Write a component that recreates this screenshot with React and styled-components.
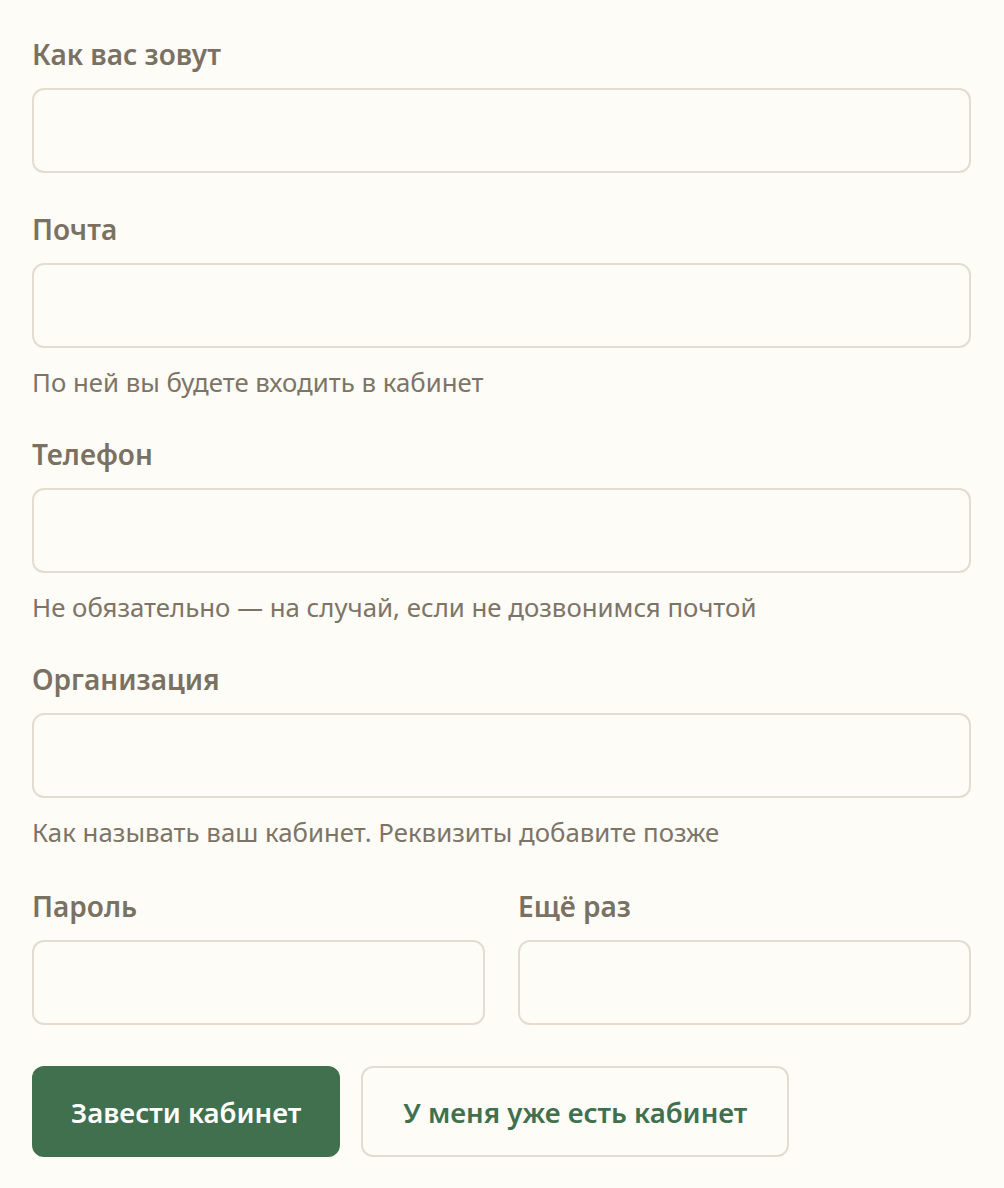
import styled, { createGlobalStyle } from "styled-components";

const GlobalStyle = createGlobalStyle`
  body {
    margin: 0;
    background: #fefcf7;
    font-family: "Noto Sans", "Open Sans", sans-serif;
  }
`;

const Page = styled.form`
  box-sizing: border-box;
  width: 1004px;
  padding: 36px 33px 30px 32px;
  display: flex;
  flex-direction: column;
`;

const Field = styled.div`
  display: flex;
  flex-direction: column;
  margin-bottom: ${(p) => (p.$last ? "0" : "38px")};
  min-width: 0;
`;

const Label = styled.label`
  font-size: 28px;
  font-weight: 600;
  line-height: 36px;
  color: #7a7163;
  margin-bottom: 16px;
`;

const Input = styled.input`
  box-sizing: border-box;
  width: 100%;
  height: 85px;
  border: 2px solid #e2ddd0;
  border-radius: 12px;
  background: #fefcf7;
  font-family: inherit;
  font-size: 24px;
  padding: 0 20px;
  outline: none;
`;

const Hint = styled.div`
  font-size: 25.8px;
  line-height: 32px;
  color: #7d7466;
  margin-top: 18px;
`;

const Row = styled.div`
  display: grid;
  grid-template-columns: 1fr 1fr;
  gap: 33px;
  margin-top: 2px;
  margin-bottom: 41px;
`;

const Actions = styled.div`
  display: flex;
  gap: 21px;
`;

const Button = styled.button`
  box-sizing: border-box;
  height: 91px;
  padding: 0 ${(p) => (p.$primary ? "37px" : "40px")};
  border-radius: 12px;
  font-family: inherit;
  font-size: 27.6px;
  font-weight: 600;
  cursor: pointer;
  border: 2px solid ${(p) => (p.$primary ? "#41704f" : "#e2ddd0")};
  background: ${(p) => (p.$primary ? "#41704f" : "#fefcf7")};
  color: ${(p) => (p.$primary ? "#ffffff" : "#41704f")};
`;

export default function App() {
  return (
    <>
      <GlobalStyle />
      <Page onSubmit={(e) => e.preventDefault()}>
        <Field>
          <Label>Как вас зовут</Label>
          <Input type="text" />
        </Field>
        <Field>
          <Label>Почта</Label>
          <Input type="email" />
          <Hint>По ней вы будете входить в кабинет</Hint>
        </Field>
        <Field>
          <Label>Телефон</Label>
          <Input type="tel" />
          <Hint>Не обязательно — на случай, если не дозвонимся почтой</Hint>
        </Field>
        <Field>
          <Label>Организация</Label>
          <Input type="text" />
          <Hint>Как называть ваш кабинет. Реквизиты добавите позже</Hint>
        </Field>
        <Row>
          <Field $last>
            <Label>Пароль</Label>
            <Input type="password" />
          </Field>
          <Field $last>
            <Label>Ещё раз</Label>
            <Input type="password" />
          </Field>
        </Row>
        <Actions>
          <Button $primary type="submit">Завести кабинет</Button>
          <Button type="button">У меня уже есть кабинет</Button>
        </Actions>
      </Page>
    </>
  );
}
